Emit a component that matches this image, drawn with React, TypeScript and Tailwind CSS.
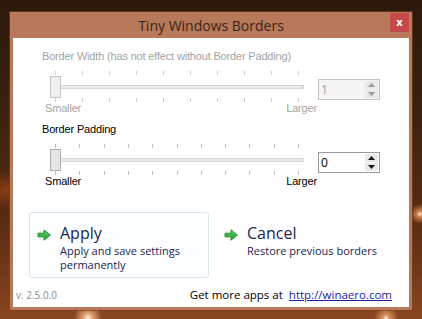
import React from "react"

// tick offsets inside the slider widget (first tick sits under the thumb centre)
const widthTicks = Array.from({ length: 10 }, (_, i) => 13 + i * 27)
const paddingTicks = Array.from({ length: 11 }, (_, i) => 13 + i * 24.3)

function SpinArrow({ up, disabled }: { up?: boolean; disabled?: boolean }) {
  return (
    <svg width="7" height="4" viewBox="0 0 7 4" className="block">
      <path
        d={up ? "M0 4 L3.5 0 L7 4 Z" : "M0 0 L7 0 L3.5 4 Z"}
        fill={disabled ? "#9a9a9a" : "#1a1a1a"}
      />
    </svg>
  )
}

function SpinBox({ value, disabled }: { value: string; disabled?: boolean }) {
  return (
    <div
      className={`mt-[9px] flex h-[21px] w-[62px] border ${
        disabled ? "border-[#c4c4c4] bg-[#f4f4f4]" : "border-[#9a9a9a] bg-white"
      }`}
    >
      <div
        className={`flex-1 pl-[2px] font-['Open_Sans',sans-serif] text-[12px] leading-[19px] ${
          disabled ? "text-[#9d9d9d]" : "text-black"
        }`}
      >
        {value}
      </div>
      <div className="my-[1px] mr-[1px] flex w-[13px] flex-col gap-[1px]">
        <div className="flex flex-1 items-center justify-center bg-[#e8e8e8]">
          <SpinArrow up disabled={disabled} />
        </div>
        <div className="flex flex-1 items-center justify-center bg-[#e8e8e8]">
          <SpinArrow disabled={disabled} />
        </div>
      </div>
    </div>
  )
}

function Slider({ ticks, disabled }: { ticks: number[]; disabled?: boolean }) {
  const tickColor = disabled ? "bg-[#d2d2d2]" : "bg-[#bdbdbd]"
  return (
    <div className="relative h-[32px] w-[276px]">
      {ticks.map((x) => (
        <React.Fragment key={x}>
          <span className={`absolute top-[1px] h-[4px] w-px ${tickColor}`} style={{ left: x }} />
          <span className={`absolute top-[28px] h-[4px] w-px ${tickColor}`} style={{ left: x }} />
        </React.Fragment>
      ))}
      <div className="absolute left-[8px] top-[15px] h-[4px] w-[254px] border border-[#d6d6d6] bg-[#e7eaea]" />
      <div
        className={`absolute left-[8px] top-[6px] h-[22px] w-[11px] border ${
          disabled ? "border-[#c6c6c6] bg-[#efefef]" : "border-[#adadad] bg-[#e5e5e5]"
        }`}
      />
    </div>
  )
}

function SliderSection({
  label,
  ticks,
  value,
  disabled,
}: {
  label: string
  ticks: number[]
  value: string
  disabled?: boolean
}) {
  const text = disabled ? "text-[#a3a3a3]" : "text-black"
  return (
    <div className={`pl-[29px] font-['Liberation_Sans',Arial,sans-serif] text-[11px] leading-[13px] tracking-[-0.17px] ${text}`}>
      <div className="h-[13px]">{label}</div>
      <div className="mt-[7px] flex">
        <Slider ticks={ticks} disabled={disabled} />
        <SpinBox value={value} disabled={disabled} />
      </div>
      <div className="flex w-[276px] justify-between pl-[3px] pr-[1px]">
        <span>Smaller</span>
        <span>Larger</span>
      </div>
    </div>
  )
}

function GreenArrow() {
  return (
    <svg width="15" height="12" viewBox="0 0 15 12" className="shrink-0">
      <defs>
        <linearGradient id="ga" x1="0" y1="0" x2="0" y2="1">
          <stop offset="0" stopColor="#5fd068" />
          <stop offset="1" stopColor="#1d9a2c" />
        </linearGradient>
      </defs>
      <ellipse cx="6" cy="6.5" rx="6" ry="5" fill="#000" opacity="0.06" />
      <path d="M1 4.2 H7 V0.8 L13.5 6 L7 11.2 V7.8 H1 Z" fill="url(#ga)" stroke="#1b8a29" strokeWidth="0.8" strokeLinejoin="round" />
    </svg>
  )
}

function CommandLink({ title, note, boxed }: { title: string; note: string; boxed?: boolean }) {
  return (
    <div
      className={`flex h-[66px] w-[180px] rounded-[3px] border pl-[7px] pt-[10px] ${
        boxed ? "border-[#d9e6ee] bg-[#fdfeff]" : "border-transparent"
      }`}
    >
      <div className="pt-[6px]">
        <GreenArrow />
      </div>
      <div className="ml-[8px] font-['Open_Sans',sans-serif] text-[#1b2553]">
        <div className="text-[16px] leading-[20px]">{title}</div>
        <div className="mt-[1px] text-[11px] leading-[14px]">{note}</div>
      </div>
    </div>
  )
}

export default function App() {
  return (
    <div className="h-[319px] w-[422px] overflow-hidden bg-[image:radial-gradient(circle_at_88px_318px,#fff6e8_0px,#e9a878_4px,transparent_14px),radial-gradient(circle_at_386px_318px,#fff1dc_0px,#d9925e_3px,transparent_12px),radial-gradient(circle_at_420px_214px,#fce4c8_0px,#c9804e_3px,transparent_10px),radial-gradient(ellipse_at_6px_190px,#8a3c14_0px,transparent_40px),linear-gradient(180deg,#2c190b_0%,#3a210f_35%,#5a2c12_70%,#8a4620_100%)] pl-[10px] pt-[12px]">
      <div className="flex h-[298px] w-[402px] flex-col bg-[#b8785a] px-[3px] pb-[3px] shadow-[0_0_0_1px_rgba(120,70,40,0.6)]">
        <div className="relative flex h-[26px] items-center justify-center">
          <span className="font-['Open_Sans',sans-serif] text-[14px] text-[#3a2418]">Tiny Windows Borders</span>
          <div className="absolute right-0 top-[1px] flex h-[19px] w-[19px] items-center justify-center bg-[#c74a4b] font-['DejaVu_Sans',sans-serif] text-[10px] font-bold leading-none text-white">
            x
          </div>
        </div>
        <div className="flex flex-1 flex-col bg-white pt-[12px]">
          <SliderSection
            label="Border Width (has not effect without Border Padding)"
            ticks={widthTicks}
            value="1"
            disabled
          />
          <div className="mt-[8px]">
            <SliderSection label="Border Padding" ticks={paddingTicks} value="0" />
          </div>
          <div className="mt-[24px] flex gap-[7px] pl-[16px]">
            <CommandLink title="Apply" note="Apply and save settings permanently" boxed />
            <CommandLink title="Cancel" note="Restore previous borders" />
          </div>
          <div className="mt-[9px] flex items-baseline justify-between pl-[3px] pr-[17px] font-['Open_Sans',sans-serif] leading-[16px]">
            <span className="text-[10px] text-[#8d8d8d]">v. 2.5.0.0</span>
            <span className="text-[11.5px] text-black">
              Get more apps at <span className="ml-[3px] text-[#1d1da8] underline">http://winaero.com</span>
            </span>
          </div>
        </div>
      </div>
    </div>
  )
}
